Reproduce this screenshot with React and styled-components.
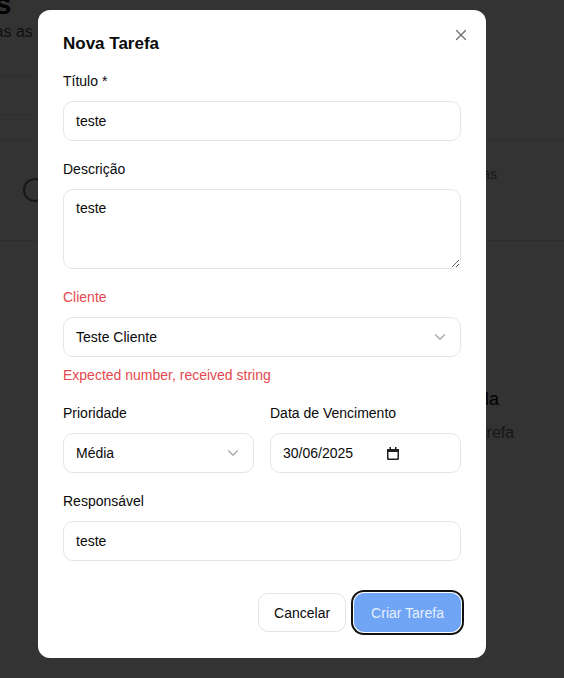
import React from 'react';
import styled, { createGlobalStyle } from 'styled-components';
import { X, ChevronDown } from 'lucide-react';

const GlobalStyle = createGlobalStyle`
    html, body {
        margin: 0;
        padding: 0;
        background: #fff;
        overflow: hidden;
        height: 100%;
    }
    body {
        font-family: "Liberation Sans", Arial, Helvetica, sans-serif;
        color: #0a0a0a;
        -webkit-font-smoothing: antialiased;
    }
    * { box-sizing: border-box; }
`;

const CalendarGlyph = () => (
    <svg width="12" height="13" viewBox="0 0 12 13" fill="none">
        <rect x="0.75" y="2.75" width="10.5" height="9.5" rx="0.5" stroke="#1f1f1f" strokeWidth="1.5" />
        <rect x="0" y="2" width="12" height="3" fill="#1f1f1f" />
        <rect x="2.5" y="0" width="1.5" height="2.5" fill="#1f1f1f" />
        <rect x="8" y="0" width="1.5" height="2.5" fill="#1f1f1f" />
    </svg>
);

const TaskDialog = () => (
    <Modal>
        <CloseButton aria-label="Fechar">
            <X size={18} strokeWidth={1.6} />
        </CloseButton>
        <Title>Nova Tarefa</Title>
        <Form>
            <Field>
                <Label>Título *</Label>
                <Input defaultValue="teste" />
            </Field>
            <Field>
                <Label>Descrição</Label>
                <TextArea defaultValue="teste" />
            </Field>
            <Field>
                <Label $error>Cliente</Label>
                <SelectTrigger>
                    <span>Teste Cliente</span>
                    <ChevronDown size={18} strokeWidth={1.5} color="#a3a3a3" />
                </SelectTrigger>
                <ErrorText>Expected number, received string</ErrorText>
            </Field>
            <TwoColumns>
                <Field>
                    <Label>Prioridade</Label>
                    <SelectTrigger>
                        <span>Média</span>
                        <ChevronDown size={18} strokeWidth={1.5} color="#a3a3a3" />
                    </SelectTrigger>
                </Field>
                <Field>
                    <Label>Data de Vencimento</Label>
                    <DateBox>
                        <DateValue>30/06/2025</DateValue>
                        <CalendarGlyph />
                    </DateBox>
                </Field>
            </TwoColumns>
            <Field>
                <Label>Responsável</Label>
                <Input defaultValue="teste" />
            </Field>
        </Form>
        <Footer>
            <Button>Cancelar</Button>
            <Button $primary>Criar Tarefa</Button>
        </Footer>
    </Modal>
);

const App = () => (
    <>
        <GlobalStyle />
        <Page>
            <PageTitle>Tarefas</PageTitle>
            <PageSubtitle>Gerencie todas as suas tarefas</PageSubtitle>
            <SearchBox />
            <Table>
                <TableRow>
                    <StatusCircle />
                    <RowMeta>Todas as tarefas</RowMeta>
                </TableRow>
            </Table>
            <EmptyState>
                <EmptyTitle>Nenhuma tarefa encontrada</EmptyTitle>
                <EmptyText>Comece criando sua primeira tarefa</EmptyText>
            </EmptyState>
        </Page>
        <Overlay />
        <TaskDialog />
    </>
);

/* pagina de fundo, atras do overlay */
const Page = styled.div`
    width: 968px;
    margin-left: -97px;
    margin-top: -17px;
`;

const PageTitle = styled.h1`
    margin: 3px 0 0;
    padding-left: 4px;
    font-size: 30px;
    line-height: 36px;
    font-weight: 700;
`;

const PageSubtitle = styled.p`
    margin: -2px 0 0;
    font-size: 16px;
    line-height: 24px;
    color: #525252;
`;

const SearchBox = styled.div`
    margin-top: 31px;
    width: 420px;
    height: 40px;
    border: 1px solid #e5e5e5;
    border-radius: 8px;
`;

const Table = styled.div`
    margin-top: 24px;
    border-top: 1px solid #e5e5e5;
    border-bottom: 1px solid #e5e5e5;
`;

const TableRow = styled.div`
    display: flex;
    align-items: center;
    height: 100px;
    padding: 24px 374px 24px 120px;
`;

const StatusCircle = styled.div`
    width: 24px;
    height: 24px;
    border: 2px solid #737373;
    border-radius: 50%;
`;

const RowMeta = styled.span`
    margin-left: auto;
    align-self: flex-start;
    font-size: 14px;
    line-height: 20px;
    color: #737373;
`;

const EmptyState = styled.div`
    margin-top: 144px;
    text-align: center;
`;

const EmptyTitle = styled.h3`
    margin: 0;
    font-size: 18px;
    line-height: 28px;
    font-weight: 500;
`;

const EmptyText = styled.p`
    margin: 8px 0 0;
    font-size: 16px;
    line-height: 24px;
    color: #737373;
`;

const Overlay = styled.div`
    position: fixed;
    inset: 0;
    background: rgba(0, 0, 0, 0.8);
`;

/* dialog */
const Modal = styled.div`
    position: fixed;
    top: 10px;
    left: 38px;
    width: 448px;
    padding: 24px 25px 26px;
    background: #fff;
    border-radius: 12px;
`;

const CloseButton = styled.button`
    position: absolute;
    top: 16px;
    right: 16px;
    display: flex;
    padding: 0;
    border: none;
    background: none;
    color: #555;
    opacity: 0.85;
`;

const Title = styled.h2`
    margin: 0 0 17px;
    font-size: 17px;
    line-height: 20px;
    font-weight: 700;
`;

const Form = styled.div`
    display: flex;
    flex-direction: column;
    gap: 18px;
`;

const Field = styled.div`
    display: flex;
    flex-direction: column;
`;

const TwoColumns = styled.div`
    display: grid;
    grid-template-columns: 1fr 1fr;
    gap: 16px;
`;

const Label = styled.label`
    margin-bottom: 10px;
    font-size: 14px;
    line-height: 20px;
    color: ${(p) => (p.$error ? '#e5484d' : '#0a0a0a')};
`;

const Input = styled.input`
    height: 40px;
    padding: 0 12px;
    border: 1px solid #e5e5e5;
    border-radius: 10px;
    font: inherit;
    font-size: 14px;
    color: #0a0a0a;
    outline: none;
`;

const TextArea = styled.textarea`
    height: 80px;
    padding: 8px 12px;
    border: 1px solid #e5e5e5;
    border-radius: 10px;
    font: inherit;
    font-size: 14px;
    line-height: 20px;
    color: #0a0a0a;
    outline: none;
`;

const SelectTrigger = styled.div`
    display: flex;
    align-items: center;
    justify-content: space-between;
    height: 40px;
    padding: 0 11px 0 12px;
    border: 1px solid #e5e5e5;
    border-radius: 10px;
    font-size: 14px;
`;

const DateBox = styled.div`
    display: flex;
    align-items: center;
    height: 40px;
    padding: 0 12px;
    border: 1px solid #e5e5e5;
    border-radius: 10px;
    font-size: 14px;
`;

const DateValue = styled.span`
    width: 104px;
`;

const ErrorText = styled.p`
    margin: 8px 0 0;
    font-size: 14px;
    line-height: 20px;
    color: #e5484d;
`;

const Footer = styled.div`
    display: flex;
    justify-content: flex-end;
    gap: 8px;
    margin-top: 32px;
`;

const Button = styled.button`
    height: 39px;
    padding: 0 ${(p) => (p.$primary ? '16px' : '15px')};
    border-radius: 10px;
    font: inherit;
    font-size: 14px;
    border: 1px solid ${(p) => (p.$primary ? '#70a5f5' : '#e5e5e5')};
    background: ${(p) => (p.$primary ? '#70a5f5' : '#fff')};
    color: ${(p) => (p.$primary ? 'rgba(255,255,255,0.85)' : '#0a0a0a')};
    box-shadow: ${(p) => (p.$primary ? '0 0 0 1px #fff, 0 0 0 3px #111' : 'none')};
`;

export default App;
